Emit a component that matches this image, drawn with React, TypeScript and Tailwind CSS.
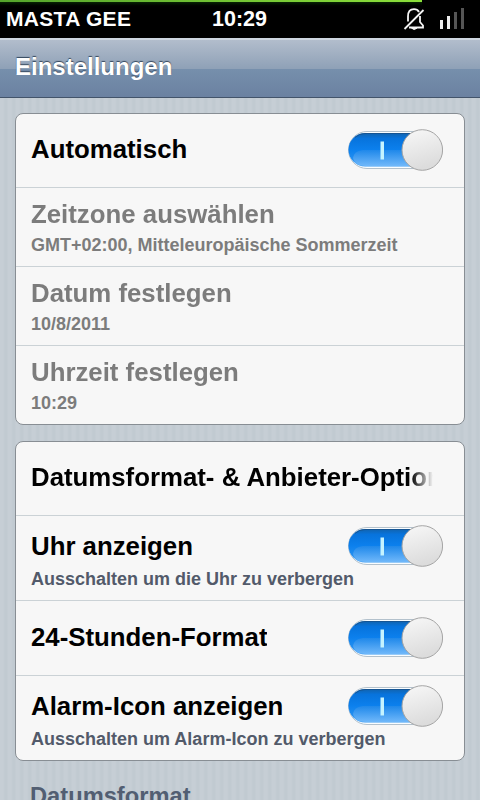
import clsx from "clsx";

function Toggle() {
  return (
    <div className="relative h-[42px] w-[96px] shrink-0">
      <svg width="96" height="42" viewBox="0 0 96 42">
        <defs>
          <linearGradient id="track" x1="0" y1="0" x2="0" y2="1">
            <stop offset="0" stopColor="#1263ad" />
            <stop offset="0.16" stopColor="#0773dc" />
            <stop offset="0.5" stopColor="#0c80ed" />
            <stop offset="1" stopColor="#369af3" />
          </linearGradient>
          <linearGradient id="gloss" x1="0" y1="0" x2="0" y2="1">
            <stop offset="0" stopColor="#1f88ea" />
            <stop offset="1" stopColor="#70b8fa" />
          </linearGradient>
          <linearGradient id="knob" x1="0" y1="0" x2="0.3" y2="1">
            <stop offset="0" stopColor="#f8f8f8" />
            <stop offset="1" stopColor="#dcdcdc" />
          </linearGradient>
        </defs>
        <rect x="1.5" y="2.5" width="92" height="37" rx="18.5" fill="#fafdff" stroke="#b3c1cc" />
        <rect x="1.5" y="4" width="90" height="33.5" rx="16.7" fill="url(#track)" />
        <path d="M6 29C7 23 12 21 18 21H80V37H18C11 37 7 34 6 29Z" fill="url(#gloss)" />
        <path d="M8 8.5Q12 4.5 18 4.5H75" fill="none" stroke="#174f88" strokeOpacity="0.75" />
        <rect x="33.5" y="12.5" width="3.5" height="18" fill="#c5f3ff" />
        <circle cx="75.3" cy="21" r="20.3" fill="url(#knob)" stroke="#a4a4a4" />
      </svg>
    </div>
  );
}

function Row({
  title,
  subtitle,
  toggle,
  disabled,
  className,
}: {
  title: string;
  subtitle?: string;
  toggle?: boolean;
  disabled?: boolean;
  className: string;
}) {
  return (
    <div className={clsx("flex flex-col justify-center pl-[15px] pr-[21px]", className)}>
      <div className="flex h-[30px] items-center justify-between">
        <span
          className={clsx(
            "overflow-hidden whitespace-nowrap text-[25.8px] leading-[30px]",
            disabled ? "text-[#7c7c7c]" : "text-black",
            !toggle && "w-[402px] [mask-image:linear-gradient(to_right,black_380px,transparent_402px)]",
            !subtitle && "-mt-px"
          )}
        >
          {title}
        </span>
        {toggle && <Toggle />}
      </div>
      {subtitle && (
        <div
          className={clsx(
            "h-[22px] whitespace-nowrap text-[18px] leading-[22px]",
            disabled ? "mt-[5px] text-[#7c7c7c]" : "mt-[7px] text-[#525a6a]"
          )}
        >
          {subtitle}
        </div>
      )}
    </div>
  );
}

function StatusBar() {
  return (
    <div className="relative h-[38px] bg-black text-[21px] leading-[38px] text-white">
      <div className="absolute left-0 top-0 h-[8px] w-[422px] bg-linear-to-b from-[#123b06] to-black"></div>
      <div className="absolute left-0 top-0 h-[2px] w-[422px] bg-linear-to-r from-[#55a42c] to-[#8ce03b]"></div>
      <div className="relative flex h-full justify-between pl-[6px] pr-[16px]">
        <span className="w-[206px] tracking-[0.3px]">MASTA GEE</span>
        <span className="flex-1 text-[21.5px]">10:29</span>
        <div className="flex pt-[7px]">
          <svg width="22" height="24" viewBox="0 0 22 24" fill="none" stroke="#f4f4f4" strokeWidth="1.8">
            <path d="M5 14.5V9.5C5 5 7 2.2 11 2.2C13.5 2.2 15 3.2 16 5" />
            <path d="M17 9V15L20 18.5V20.5H6" />
            <path d="M1.5 22L20.5 3" />
            <path d="M8.5 21Q11 24 14 21Z" fill="#f4f4f4" strokeWidth="1" />
          </svg>
          <div className="ml-[15px] flex h-[22px] items-end gap-[4px]">
            <i className="h-[9px] w-[3px] bg-[#eeeeee]"></i>
            <i className="h-[13px] w-[3px] bg-[#eeeeee]"></i>
            <i className="h-[17px] w-[3px] bg-[#555555]"></i>
            <i className="h-[21px] w-[3px] bg-[#555555]"></i>
          </div>
        </div>
      </div>
    </div>
  );
}

export default function App() {
  return (
    <div className="h-[800px] w-[480px] overflow-hidden bg-[#c3cbd2] bg-[repeating-linear-gradient(90deg,#c6ced5_0px,#c6ced5_3px,#c1cad1_5px,#c1cad1_7px,#c6ced5_8px)] font-['Liberation_Sans',Arial,sans-serif] font-bold">
      <StatusBar />
      <header className="h-[60px] border-b border-t-2 border-b-[#43546a] border-t-[#ced6e0] bg-[linear-gradient(#b2bdcc_0%,#8fa1b7_50%,#768fac_51%,#6b81a1_100%)] pl-[15px] text-[24px] leading-[54px] text-white [text-shadow:0_-1px_1px_#34465c]">
        Einstellungen
      </header>
      <main className="flex flex-col gap-[16px] px-[15px] pt-[15px]">
        <section className="h-[312px] divide-y divide-[#cbd2d6] overflow-hidden rounded-[8px] border border-[#888e94] bg-[#f7f7f7]">
          <Row title="Automatisch" toggle className="h-[74px] pb-[2px]" />
          <Row title="Zeitzone auswählen" subtitle="GMT+02:00, Mitteleuropäische Sommerzeit" disabled className="h-[79px]" />
          <Row title="Datum festlegen" subtitle="10/8/2011" disabled className="h-[79px]" />
          <Row title="Uhrzeit festlegen" subtitle="10:29" disabled className="h-[79px]" />
        </section>
        <section className="h-[320px] divide-y divide-[#cbd2d6] overflow-hidden rounded-[8px] border border-[#888e94] bg-[#f7f7f7]">
          <Row title="Datumsformat- &amp; Anbieter-Optionen" className="h-[74px] pb-[2px]" />
          <Row title="Uhr anzeigen" subtitle="Ausschalten um die Uhr zu verbergen" toggle className="h-[85px] pt-[4px]" />
          <Row title="24-Stunden-Format" toggle className="h-[75px] pb-[1px]" />
          <Row title="Alarm-Icon anzeigen" subtitle="Ausschalten um Alarm-Icon zu verbergen" toggle className="h-[85px] pt-[4px]" />
        </section>
        <h2 className="pl-[15px] pt-[4px] text-[23.7px] leading-[30px] text-[#525e72]">Datumsformat</h2>
      </main>
    </div>
  );
}
